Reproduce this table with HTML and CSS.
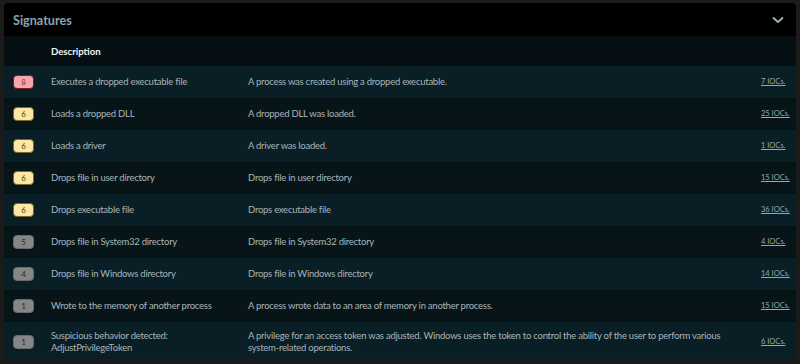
FILE: index.html
```html
<!DOCTYPE html>
<html>
<head>
<meta charset="utf-8">
<link rel="stylesheet" href="styles.css">
</head>
<body>
<section class="card">
  <header class="card-head">
    <h2 class="title">Signatures</h2>
    <svg class="chev" width="12" height="8" viewBox="0 0 12 8"><path d="M1 1.5 L6 6 L11 1.5" fill="none" stroke="#9fb6c2" stroke-width="1.8"/></svg>
  </header>
  <div class="row head-row">
    <div></div>
    <div class="th">Description</div>
    <div></div>
    <div></div>
  </div>
  <div class="row alt">
    <div class="cell-b"><span class="badge red">8</span></div>
    <div class="cell">Executes a dropped executable file</div>
    <div class="cell">A process was created using a dropped executable.</div>
    <div class="cell ioc"><a href="#">7 IOCs.</a></div>
  </div>
  <div class="row">
    <div class="cell-b"><span class="badge yellow">6</span></div>
    <div class="cell">Loads a dropped DLL</div>
    <div class="cell">A dropped DLL was loaded.</div>
    <div class="cell ioc"><a href="#">25 IOCs.</a></div>
  </div>
  <div class="row alt">
    <div class="cell-b"><span class="badge yellow">6</span></div>
    <div class="cell">Loads a driver</div>
    <div class="cell">A driver was loaded.</div>
    <div class="cell ioc"><a href="#">1 IOCs.</a></div>
  </div>
  <div class="row">
    <div class="cell-b"><span class="badge yellow">6</span></div>
    <div class="cell">Drops file in user directory</div>
    <div class="cell">Drops file in user directory</div>
    <div class="cell ioc"><a href="#">15 IOCs.</a></div>
  </div>
  <div class="row alt">
    <div class="cell-b"><span class="badge yellow">6</span></div>
    <div class="cell">Drops executable file</div>
    <div class="cell">Drops executable file</div>
    <div class="cell ioc"><a href="#">36 IOCs.</a></div>
  </div>
  <div class="row">
    <div class="cell-b"><span class="badge gray">5</span></div>
    <div class="cell">Drops file in System32 directory</div>
    <div class="cell">Drops file in System32 directory</div>
    <div class="cell ioc"><a href="#">4 IOCs.</a></div>
  </div>
  <div class="row alt">
    <div class="cell-b"><span class="badge gray">4</span></div>
    <div class="cell">Drops file in Windows directory</div>
    <div class="cell">Drops file in Windows directory</div>
    <div class="cell ioc"><a href="#">14 IOCs.</a></div>
  </div>
  <div class="row">
    <div class="cell-b"><span class="badge gray">1</span></div>
    <div class="cell">Wrote to the memory of another process</div>
    <div class="cell">A process wrote data to an area of memory in another process.</div>
    <div class="cell ioc"><a href="#">15 IOCs.</a></div>
  </div>
  <div class="row alt last">
    <div class="cell-b"><span class="badge gray">1</span></div>
    <div class="cell">Suspicious behavior detected:<br>AdjustPrivilegeToken</div>
    <div class="cell">A privilege for an access token was adjusted. Windows uses the token to control the ability of the user to perform various system-related operations.</div>
    <div class="cell ioc"><a href="#">6 IOCs.</a></div>
  </div>
</section>
</body>
</html>
```

FILE: styles.css
```css
* { box-sizing: border-box; }
html, body { margin: 0; padding: 0; }
body {
  background: #1b1b1b;
  font-family: "Lato", "Open Sans", sans-serif;
  padding: 3px 4px 0 4px;
  height: 364px;
  overflow: hidden;
}
.card {
  background: #000;
  border-radius: 4px;
  overflow: hidden;
}
.card-head {
  height: 33px;
  display: flex;
  align-items: center;
  justify-content: space-between;
  padding: 2px 12px 0 9px;
}
.title {
  margin: 0;
  font-size: 12.6px;
  font-weight: 700;
  color: #8ba3ae;
}
.chev { display: block; margin-top: -2px; }
.row {
  display: grid;
  grid-template-columns: 47px 197px 1fr 35px;
  align-items: center;
  min-height: 32px;
  background: #071519;
}
.row.alt { background: #0a1e25; }
.head-row {
  background: #050f13;
  height: 30px;
  min-height: 30px;
}
.th {
  color: #f2f5f6;
  font-weight: 700;
  font-size: 9.6px;
}
.row.last { min-height: 37px; padding-top: 3px; }
.cell-b { padding-left: 9px; display: flex; }
.cell {
  color: #a9b5b9;
  font-size: 9.5px;
  letter-spacing: -0.25px;
  line-height: 12px;
}
.cell:nth-child(3) { padding-right: 22px; }
.badge {
  display: inline-flex;
  align-items: center;
  justify-content: center;
  width: 21px;
  height: 14px;
  border-radius: 4px;
  font-size: 8px;
  letter-spacing: 0;
  color: #333;
}
.badge.red { background: #f9a5ab; border: 1px solid #7a1d2a; color: #6a3a40; }
.badge.yellow { background: #fde8a3; border: 1px solid #7d6a2e; color: #4a4020; }
.badge.gray { background: #868686; border: 1px solid #6a6a6a; color: #2a2a2a; }
.ioc { font-size: 7.5px; letter-spacing: 0; white-space: nowrap; }
.ioc a { color: #9aa8ad; text-decoration: underline; }
```
